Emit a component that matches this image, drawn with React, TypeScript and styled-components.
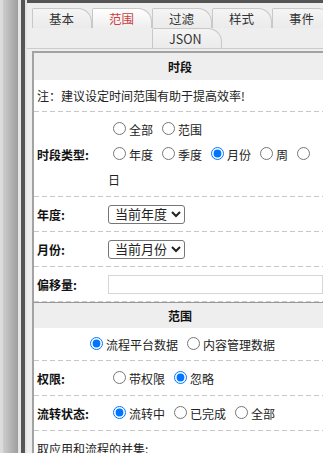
import styled, { createGlobalStyle } from "styled-components";

const tabs = ["基本", "范围", "过滤", "样式", "事件"];

const Option = ({ name, label, checked }: { name: string; label: string; checked?: boolean }) => (
  <>
    <Radio type="radio" name={name} defaultChecked={checked} />
    {label}{" "}
  </>
);

const App = () => {
  return (
    <Page>
      <GlobalStyle />
      <Rail />
      <Main>
        <TabBar>
          <TabRow>
            {tabs.map((t) => (
              <Tab key={t} $active={t === "范围"}>
                {t}
              </Tab>
            ))}
          </TabRow>
          <TabRow $indent={120}>
            <Tab>JSON</Tab>
          </TabRow>
        </TabBar>

        <Panel>
          <SectionHeader>时段</SectionHeader>
          <NoteRow>注：建议设定时间范围有助于提高效率!</NoteRow>
          <Row $pad={5}>
            <Label>时段类型:</Label>
            <RadioCell $width={210}>
              <Option name="period" label="全部" />
              <Option name="period" label="范围" />
              <br />
              <Option name="ptype" label="年度" />
              <Option name="ptype" label="季度" />
              <Option name="ptype" label="月份" checked />
              <Option name="ptype" label="周" />
              <Option name="ptype" label="日" />
            </RadioCell>
          </Row>
          <Row $pad={8}>
            <Label>年度:</Label>
            <Select defaultValue="cur">
              <option value="cur">当前年度</option>
            </Select>
          </Row>
          <Row $pad={8}>
            <Label>月份:</Label>
            <Select defaultValue="cur">
              <option value="cur">当前月份</option>
            </Select>
          </Row>
          <Row $pad={8}>
            <Label>偏移量:</Label>
            <TextInput type="text" />
          </Row>

          <SectionHeader $divided>范围</SectionHeader>
          <CenterRow>
            <RadioCell>
              <Option name="source" label="流程平台数据" checked />
              <Option name="source" label="内容管理数据" />
            </RadioCell>
          </CenterRow>
          <Row $pad={5}>
            <Label>权限:</Label>
            <RadioCell>
              <Option name="auth" label="带权限" />
              <Option name="auth" label="忽略" checked />
            </RadioCell>
          </Row>
          <Row $pad={5}>
            <Label>流转状态:</Label>
            <RadioCell>
              <Option name="flow" label="流转中" checked />
              <Option name="flow" label="已完成" />
              <Option name="flow" label="全部" />
            </RadioCell>
          </Row>
          <TailRow>取应用和流程的并集:</TailRow>
        </Panel>
      </Main>
    </Page>
  );
};

export default App;

const GlobalStyle = createGlobalStyle`
  html, body {
    margin: 0;
    padding: 0;
    overflow: hidden;
    background: #eee;
  }
  body {
    font-family: "Noto Sans CJK SC", sans-serif;
    font-size: 12px;
    color: #222;
  }
`;

const Page = styled.div`
  display: flex;
  width: 326px;
  height: 453px;
`;

const Rail = styled.div`
  flex: 0 0 27px;
  background: linear-gradient(
    to right,
    #dcdcdc 0 3px,
    #cdcdcd 3px,
    #9e9e9e 18px,
    #e6e6e6 18px 21px,
    #555 21px 25px,
    #e4e4e4 25px
  );
`;

const Main = styled.div`
  flex: 1;
  min-width: 0;
  display: flex;
  flex-direction: column;
  background: #eee;
  border-top: 3px solid #555;
`;

const TabBar = styled.div`
  padding: 5px 0 0 5px;
  border-bottom: 1px solid #ccc;
`;

const TabRow = styled.div<{ $indent?: number }>`
  display: flex;
  height: 20px;
  padding-left: ${(p) => p.$indent ?? 0}px;
`;

const Tab = styled.div<{ $active?: boolean }>`
  box-sizing: border-box;
  min-width: 60px;
  height: 20px;
  padding: 0 20px 0 16px;
  border: 1px solid #c8c8c8;
  border-bottom: none;
  border-radius: 2px 14px 0 0;
  background: ${(p) =>
    p.$active ? "linear-gradient(#fff, #eee)" : "linear-gradient(#f4f4f4, #ebebeb)"};
  color: ${(p) => (p.$active ? "#cc4040" : "#333")};
  font-size: 12.5px;
  line-height: 19px;
  text-align: center;
  white-space: nowrap;
`;

const Panel = styled.div`
  flex: 1;
  margin: 2px 0 0 5px;
  border: 2px solid #a3a3a3;
  border-right: none;
  background: #fff;
`;

const SectionHeader = styled.div<{ $divided?: boolean }>`
  height: ${(p) => (p.$divided ? 25 : 27)}px;
  line-height: ${(p) => (p.$divided ? 25 : 27)}px;
  border-top: ${(p) => (p.$divided ? "1px solid #999" : "none")};
  background: #eee;
  text-align: center;
  font-weight: 700;
  color: #111;
`;

const dashed = `
  background-image: linear-gradient(to right, #c8c8c8 5px, transparent 5px);
  background-size: 8px 1px;
  background-repeat: repeat-x;
  background-position: left bottom;
`;

const NoteRow = styled.div`
  height: 32px;
  line-height: 32px;
  padding-left: 3px;
  ${dashed}
`;

const Row = styled.div<{ $pad: number }>`
  display: flex;
  align-items: center;
  padding: ${(p) => p.$pad}px 0;
  ${dashed}
`;

const CenterRow = styled.div`
  display: flex;
  justify-content: center;
  padding: 4px 0;
  ${dashed}
`;

const TailRow = styled.div`
  padding: 9px 0 0 3px;
  line-height: 18px;
`;

const Label = styled.div`
  box-sizing: border-box;
  flex: 0 0 74px;
  padding-left: 3px;
  font-weight: 700;
  color: #111;
`;

const RadioCell = styled.div<{ $width?: number }>`
  width: ${(p) => (p.$width ? `${p.$width}px` : "auto")};
  line-height: 25px;
  word-spacing: 1.3px;
`;

const Radio = styled.input`
  margin: 3px 3px 0 5px;
`;

const Select = styled.select`
  box-sizing: border-box;
  width: 77px;
  height: 19px;
  padding: 0 0 0 2px;
  border: 1px solid #767676;
  border-radius: 3px;
  background: #fff;
  color: #222;
  font-family: "Liberation Sans", "Noto Sans CJK SC", sans-serif;
  font-size: 13px;
`;

const TextInput = styled.input`
  box-sizing: border-box;
  width: 215px;
  height: 19px;
  border: 1px solid #d6d6d6;
  padding: 0 2px;
  font-family: "Noto Sans CJK SC", sans-serif;
  font-size: 12px;
`;
